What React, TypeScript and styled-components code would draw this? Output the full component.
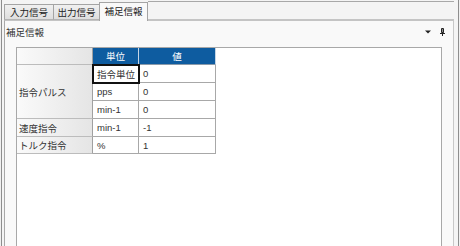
import styled, { createGlobalStyle } from "styled-components"

const GlobalStyle = createGlobalStyle`
  html, body {
    margin: 0;
    padding: 0;
    background: #f0f0f0;
  }
  body {
    font-family: "Liberation Sans", "Noto Sans CJK JP", sans-serif;
    font-size: 9.5px;
    color: #333;
  }
`

const Frame = styled.div`
  box-sizing: border-box;
  width: 458px;
  height: 246px;
  margin-left: 1px;
  padding: 0 4px 0 2px;
  border-left: 1px solid #8e8e8e;
  border-right: 1px solid #8e8e8e;
  display: flex;
  flex-direction: column;
  background: #f4f4f4;
`

const TabStrip = styled.div`
  display: flex;
  align-items: flex-end;
  height: 20px;
  flex-shrink: 0;
`

const Tab = styled.div<{ $active?: boolean; $width: number }>`
  box-sizing: border-box;
  width: ${({ $width }) => $width}px;
  height: ${({ $active }) => ($active ? 19 : 16)}px;
  margin-bottom: ${({ $active }) => ($active ? -1 : 0)}px;
  display: flex;
  align-items: center;
  justify-content: center;
  padding-bottom: ${({ $active }) => ($active ? 3 : 0)}px;
  border: 1px solid #a4a4a4;
  border-bottom: ${({ $active }) => ($active ? "none" : "1px solid #b4b4b4")};
  background: ${({ $active }) =>
    $active ? "#f9f9f9" : "linear-gradient(#f0f0f0, #dedede)"};
  color: #222;
  position: relative;
  z-index: ${({ $active }) => ($active ? 1 : 0)};
  & + & {
    margin-left: -1px;
  }
`

const StripFiller = styled.div`
  flex: 1;
  align-self: stretch;
  margin-top: 1px;
  border-top: 1px solid #a8a8a8;
  border-bottom: 1px solid #c4c4c4;
`

const Panel = styled.div`
  flex: 1;
  display: flex;
  flex-direction: column;
  border: 1px solid #a8a8a8;
  border-top-color: #c4c4c4;
  border-right-color: #c8c8c8;
  border-bottom: none;
  background: #f9f9f9;
  min-height: 0;
`

const PanelHeader = styled.div`
  height: 21px;
  display: flex;
  align-items: center;
  padding: 0 8px 0 1px;
  margin-bottom: 5px;
  flex-shrink: 0;
`

const PanelTitle = styled.span`
  flex: 1;
`

const HeaderIcons = styled.div`
  display: flex;
  align-items: center;
  gap: 9px;
`

const GridBox = styled.div`
  flex: 1;
  margin: 0 11px;
  border: 1px solid #a8a8a8;
  border-bottom: none;
  background: #fff;
`

const Grid = styled.div`
  display: grid;
  grid-template-columns: 76px 46px 77px;
  grid-template-rows: 17px 18px 18px 18px 18px 17px;
`

const Cell = styled.div<{ $kind?: "corner" | "head" | "row" | "data"; $span?: number; $selected?: boolean }>`
  box-sizing: border-box;
  display: flex;
  align-items: center;
  border-right: 1px solid #a8a8a8;
  border-bottom: 1px solid #a8a8a8;
  padding-left: ${({ $kind }) => ($kind === "row" ? 2 : 4)}px;
  grid-row: ${({ $span }) => ($span ? `span ${$span}` : "auto")};
  white-space: nowrap;
  ${({ $kind }) =>
    $kind === "corner" || $kind === "row"
      ? "background: linear-gradient(to right, #fafafa, #e5e5e5); border-bottom-color: #bcbcbc; border-right-color: #a0a0a0;"
      : ""}
  ${({ $kind }) =>
    $kind === "head"
      ? "background: #0e5ca0; color: #fff; justify-content: center; padding-left: 0; border-right-color: #c5d5e5; border-bottom-color: #8a9aaa;"
      : ""}
  ${({ $selected }) => ($selected ? "outline: 2px solid #111; outline-offset: -1px; position: relative;" : "")}
`

const DropArrow = () => (
  <svg width="6" height="4" viewBox="0 0 6 4">
    <path d="M0 0.5 H6 L3 3.5 Z" fill="#222" />
  </svg>
)

const PinIcon = () => (
  <svg width="5" height="8" viewBox="0 0 5 8">
    <path d="M1.5 0.5 H3.5 V4.5 H1.5 Z" fill="none" stroke="#222" strokeWidth="1" />
    <path d="M3 1 V4.5" stroke="#222" strokeWidth="1" />
    <path d="M0 5.5 H5" stroke="#222" strokeWidth="1" />
    <path d="M2.5 5.5 V8" stroke="#222" strokeWidth="1" />
  </svg>
)

const tabs = [
  { label: "入力信号", width: 50 },
  { label: "出力信号", width: 47 },
  { label: "補足信報", width: 49, active: true },
]

export default function App() {
  return (
    <>
      <GlobalStyle />
      <Frame>
        <TabStrip>
          {tabs.map((t) => (
            <Tab key={t.label} $active={t.active} $width={t.width}>
              {t.label}
            </Tab>
          ))}
          <StripFiller />
        </TabStrip>
        <Panel>
          <PanelHeader>
            <PanelTitle>補足信報</PanelTitle>
            <HeaderIcons>
              <DropArrow />
              <PinIcon />
            </HeaderIcons>
          </PanelHeader>
          <GridBox>
            <Grid>
              <Cell $kind="corner" />
              <Cell $kind="head">単位</Cell>
              <Cell $kind="head">値</Cell>

              <Cell $kind="row" $span={3}>指令パルス</Cell>
              <Cell $kind="data" $selected>指令単位</Cell>
              <Cell $kind="data">0</Cell>
              <Cell $kind="data">pps</Cell>
              <Cell $kind="data">0</Cell>
              <Cell $kind="data">min-1</Cell>
              <Cell $kind="data">0</Cell>

              <Cell $kind="row">速度指令</Cell>
              <Cell $kind="data">min-1</Cell>
              <Cell $kind="data">-1</Cell>

              <Cell $kind="row">トルク指令</Cell>
              <Cell $kind="data">%</Cell>
              <Cell $kind="data">1</Cell>
            </Grid>
          </GridBox>
        </Panel>
      </Frame>
    </>
  )
}
